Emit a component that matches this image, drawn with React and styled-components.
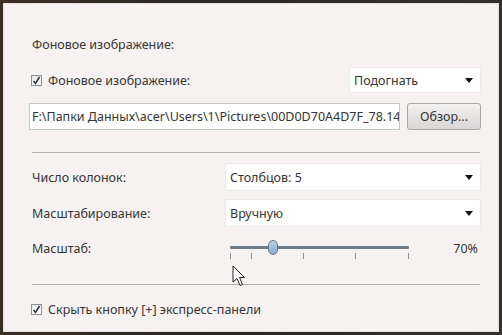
import React from "react";
import styled, { createGlobalStyle } from "styled-components";

const Global = createGlobalStyle`
  html, body { margin: 0; padding: 0; background: #2d2925; }
  * { box-sizing: border-box; }
  #root { width: 502px; height: 335px; overflow: hidden; }
`;

const Screen = styled.div`
  width: 502px;
  height: 335px;
  padding: 3px 3px 3px 3px;
  background: linear-gradient(90deg, #3a2f25 0%, #2a2826 40%, #34302c 100%);
`;

const Dialog = styled.div`
  position: relative;
  width: 496px;
  height: 329px;
  background: #f7f2f2;
  border: 1px solid #e6e0e0;
  padding: 32px 17px 0 25px;
  font-family: "Noto Sans", "Open Sans", sans-serif;
  font-size: 12.5px;
  color: #353535;
  display: flex;
  flex-direction: column;
`;

const Heading = styled.div`
  height: 18px;
  line-height: 18px;
  padding-left: 3px;
`;

const Row = styled.div`
  display: flex;
  align-items: center;
  justify-content: space-between;
  gap: ${(p) => p.$gap || 0}px;
  margin-top: ${(p) => p.$mt || 0}px;
  height: ${(p) => p.$h || 26}px;
`;

const GridRow = styled.div`
  display: grid;
  grid-template-columns: 196px 1fr;
  align-items: center;
  margin-top: ${(p) => p.$mt || 0}px;
  height: ${(p) => p.$h || 28}px;
`;

const Label = styled.div`
  padding-left: 3px;
  white-space: nowrap;
`;

const CheckLabel = styled.label`
  display: flex;
  align-items: center;
  gap: 6px;
  padding-left: 2px;
  white-space: nowrap;
`;

const Box = styled.span`
  width: 11px;
  height: 11px;
  border: 1px solid #8e8f8f;
  background: linear-gradient(180deg, #e8e8e8, #ffffff);
  display: inline-flex;
  align-items: center;
  justify-content: center;
`;

const Select = styled.div`
  display: flex;
  align-items: center;
  justify-content: space-between;
  width: ${(p) => (p.$w ? p.$w + "px" : "100%")};
  height: 100%;
  background: #ffffff;
  border: 1px solid #ece8e8;
  padding: 0 7px 0 4px;
  white-space: nowrap;
`;

const Arrow = styled.span`
  width: 0;
  height: 0;
  border-left: 4px solid transparent;
  border-right: 4px solid transparent;
  border-top: 5px solid #111;
`;

const PathInput = styled.div`
  flex: 1;
  height: 27px;
  background: #ffffff;
  border: 1px solid #c9c6c6;
  padding: 0 0 0 2px;
  line-height: 25px;
  white-space: nowrap;
  overflow: hidden;
`;

const Button = styled.div`
  width: 74px;
  height: 27px;
  border: 1px solid #a9a7a7;
  border-radius: 3px;
  background: linear-gradient(180deg, #f4f2f2 0%, #e6e3e3 50%, #d9d6d6 100%);
  display: flex;
  align-items: center;
  justify-content: center;
`;

const Separator = styled.div`
  height: 1px;
  background: #b3afaf;
  margin: ${(p) => p.$mt || 0}px 1px 0 3px;
`;

const SliderCell = styled.div`
  display: flex;
  align-items: center;
  justify-content: space-between;
  height: 100%;
`;

const Track = styled.div`
  position: relative;
  width: 190px;
  height: 30px;
`;

const Line = styled.div`
  position: absolute;
  left: 5px;
  top: 13px;
  width: 179px;
  height: 3px;
  background: #6f7b86;
  border-radius: 1px;
`;

const Tick = styled.div`
  position: absolute;
  top: 20px;
  width: 1px;
  height: 6px;
  background: #8a8f95;
`;

const Thumb = styled.div`
  position: absolute;
  left: 43px;
  top: 7px;
  width: 10px;
  height: 15px;
  border-radius: 5px;
  border: 1px solid #5c7594;
  background: linear-gradient(180deg, #b9cfe6 0%, #8eaed2 100%);
`;

const Percent = styled.div`
  padding-right: 3px;
`;

const Cursor = styled.svg`
  position: absolute;
  left: 228px;
  top: 261px;
`;

const ticks = [5, 26, 78, 130, 183];

function Check() {
  return (
    <Box>
      <svg width="9" height="9" viewBox="0 0 9 9">
        <path d="M1.5 5 L3.5 7.5 L7.5 1" stroke="#2a3140" strokeWidth="1.5" fill="none" />
      </svg>
    </Box>
  );
}

export default function App() {
  return (
    <Screen>
      <Global />
      <Dialog>
        <Heading>Фоновое изображение:</Heading>
        <Row $mt={13} $h={26}>
          <CheckLabel>
            <Check />
            Фоновое изображение:
          </CheckLabel>
          <Select $w={132}>
            Подогнать
            <Arrow />
          </Select>
        </Row>
        <Row $mt={10} $h={27} $gap={7}>
          <PathInput>F:\Папки Данных\acer\Users\1\Pictures\00D0D70A4D7F_78.14</PathInput>
          <Button>Обзор...</Button>
        </Row>
        <Separator $mt={22} />
        <GridRow $mt={10}>
          <Label>Число колонок:</Label>
          <Select>
            Столбцов: 5
            <Arrow />
          </Select>
        </GridRow>
        <GridRow $mt={8}>
          <Label>Масштабирование:</Label>
          <Select>
            Вручную
            <Arrow />
          </Select>
        </GridRow>
        <GridRow $mt={6} $h={30}>
          <Label>Масштаб:</Label>
          <SliderCell>
            <Track>
              <Line />
              {ticks.map((t) => (
                <Tick key={t} style={{ left: t + "px" }} />
              ))}
              <Thumb />
            </Track>
            <Percent>70%</Percent>
          </SliderCell>
        </GridRow>
        <Separator $mt={21} />
        <Row $mt={15} $h={18}>
          <CheckLabel>
            <Check />
            Скрыть кнопку [+] экспресс-панели
          </CheckLabel>
        </Row>
        <Cursor width="14" height="22" viewBox="0 0 14 22">
          <path d="M1 1 L1 17 L5 13.5 L8 20.5 L10.5 19.5 L7.5 12.5 L12.5 12.5 Z" fill="#ffffff" stroke="#222" strokeWidth="1" strokeLinejoin="round" />
        </Cursor>
      </Dialog>
    </Screen>
  );
}
